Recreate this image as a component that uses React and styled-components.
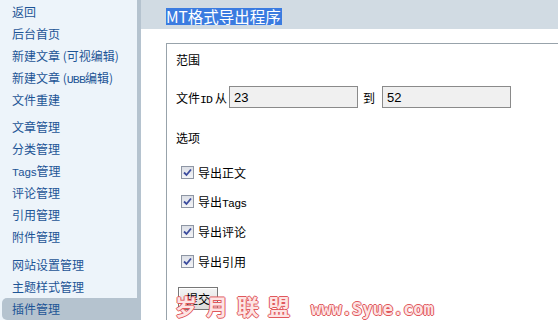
import React from 'react';
import styled, {createGlobalStyle} from 'styled-components';

const Global = createGlobalStyle`
    html, body {
        margin: 0;
        padding: 0;
        overflow: hidden;
        background: #ffffff;
    }
    body {
        font-family: "Noto Sans CJK SC", "Liberation Sans", sans-serif;
        font-size: 12px;
    }
`;

const Seite = styled.div`
    display: flex;
    width: 558px;
    height: 320px;
    position: relative;
    overflow: hidden;
`;

const Seitenleiste = styled.nav`
    width: 137px;
    flex: 0 0 137px;
    background: #edf4fa;
    border-right: 4px solid #b5c3cf;
    padding-top: 1px;
    box-sizing: content-box;
`;

const Gruppe = styled.div`
    margin-bottom: ${(p) => p.$abstand || 0}px;
`;

const Eintrag = styled.a`
    display: block;
    height: 22px;
    line-height: 22px;
    margin-left: 2px;
    margin-right: -4px;
    padding-left: 10px;
    color: #1d5596;
    font-size: 12px;
    white-space: nowrap;
    text-decoration: none;
    border-radius: 5px 0 0 5px;
    background: ${(p) => (p.$aktiv ? '#b5c3cf' : 'transparent')};
`;

const Haupt = styled.main`
    flex: 1;
    display: flex;
    flex-direction: column;
    min-width: 0;
`;

const Kopf = styled.div`
    flex: 0 0 29px;
    height: 29px;
    background: #d1dbe3;
    padding: 8px 0 0 25px;
    box-sizing: border-box;
`;

const Titel = styled.span`
    display: inline-block;
    height: 17px;
    line-height: 17px;
    font-size: 15.5px;
    color: #ffffff;
    background: #3a7be0;
    padding-right: 1px;
`;

const Inhalt = styled.div`
    flex: 0 0 auto;
    padding: 14px 0 0 25px;
`;

const Panel = styled.div`
    border-left: 1px solid #98a3ab;
    border-top: 1px solid #98a3ab;
    padding: 6px 0 20px 9px;
`;

const Beschriftung = styled.div`
    height: 20px;
    line-height: 20px;
    font-size: 12px;
    color: #000;
    margin-top: ${(p) => p.$oben || 0}px;
`;

const Bereich = styled.div`
    display: flex;
    align-items: center;
    height: 22px;
    margin-top: 16px;
    font-size: 12px;
    color: #000;
`;

const Feld = styled.input`
    width: 129px;
    height: 22px;
    box-sizing: border-box;
    border: 1px solid #8a8a8a;
    background: #f0f0f0;
    font-family: "Liberation Sans", sans-serif;
    font-size: 13px;
    padding: 0 4px;
    color: #000;
    margin-left: ${(p) => p.$links || 0}px;
    outline: none;
`;

const Text = styled.span`
    margin-left: ${(p) => p.$links || 0}px;
    white-space: nowrap;
`;

const Mono = styled.span`
    font-family: "Liberation Mono", "DejaVu Sans Mono", monospace;
    font-size: 11.5px;
    letter-spacing: -0.8px;
`;

const Optionen = styled.div`
    display: flex;
    flex-direction: column;
    gap: 9.7px;
    margin-top: 14px;
`;

const Option = styled.label`
    display: flex;
    align-items: center;
    height: 20px;
    padding-left: 5px;
    font-size: 12px;
    color: #000;
`;

const Haken = styled.span`
    width: 11px;
    height: 11px;
    flex: 0 0 11px;
    border: 1px solid #8e96a4;
    background: linear-gradient(#dcdfe6, #f4f5f8);
    display: inline-flex;
    align-items: center;
    justify-content: center;
    margin-right: 4px;
`;

const Knopf = styled.button`
    margin-top: 16px;
    margin-left: 2px;
    width: 40px;
    height: 23px;
    font-family: "Noto Sans CJK SC", sans-serif;
    font-size: 12px;
    color: #000;
    background: linear-gradient(#f4f4f4, #dcdcdc);
    border: 1px solid #777;
    box-shadow: inset 1px 1px 0 #fff;
    padding: 0;
`;

const Wasserzeichen = styled.div`
    position: absolute;
    left: 175px;
    top: 289px;
    display: flex;
    align-items: baseline;
    gap: 12px;
    pointer-events: none;
    color: #fde4e4;
    text-shadow: 1px 0 0 #e0585c, -1px 0 0 #e0585c, 0 1px 0 #e0585c, 0 -1px 0 #e0585c;
`;

const Zeichen = styled.span`
    font-size: ${(p) => p.$groesse}px;
    font-weight: bold;
    letter-spacing: ${(p) => p.$abstand || 0}px;
    font-family: ${(p) => (p.$latein ? '"DejaVu Sans Mono", monospace' : '"Noto Sans CJK SC", sans-serif')};
`;

const gruppen = [
    {abstand: 5, eintraege: ['返回', '后台首页', '新建文章 (可视编辑)', '新建文章 (UBB编辑)', '文件重建']},
    {abstand: 6, eintraege: ['文章管理', '分类管理', 'Tags管理', '评论管理', '引用管理', '附件管理']},
    {abstand: 0, eintraege: ['网站设置管理', '主题样式管理', '插件管理']},
];

const optionen = ['导出正文', '导出Tags', '导出评论', '导出引用'];

// lateinische Teile in schmaler Schrift wie im Original
const mitMono = (text) =>
    text.split(/(Tags|UBB|ID)/).map((teil, i) =>
        ['Tags', 'UBB', 'ID'].includes(teil) ? <Mono key={i}>{teil}</Mono> : teil
    );

const HakenIcon = () => (
    <svg width="9" height="9" viewBox="0 0 9 9">
        <path d="M1 4.5 L3.5 7 L8 1.5" fill="none" stroke="#3c4c9e" strokeWidth="1.8"/>
    </svg>
);

const App = () => {
    return (
        <>
            <Global/>
            <Seite>
                <Seitenleiste>
                    {gruppen.map((g, i) => (
                        <Gruppe key={i} $abstand={g.abstand}>
                            {g.eintraege.map((e) => (
                                <Eintrag key={e} $aktiv={e === '插件管理'}>{mitMono(e)}</Eintrag>
                            ))}
                        </Gruppe>
                    ))}
                </Seitenleiste>
                <Haupt>
                    <Kopf><Titel>MT格式导出程序</Titel></Kopf>
                    <Inhalt>
                        <Panel>
                            <Beschriftung>范围</Beschriftung>
                            <Bereich>
                                <Text>{mitMono('文件ID')}&nbsp;从</Text>
                                <Feld $links={2} defaultValue="23"/>
                                <Text $links={5}>到</Text>
                                <Feld $links={7} defaultValue="52"/>
                            </Bereich>
                            <Beschriftung $oben={20}>选项</Beschriftung>
                            <Optionen>
                                {optionen.map((o) => (
                                    <Option key={o}>
                                        <Haken><HakenIcon/></Haken>
                                        <Text>{mitMono(o)}</Text>
                                    </Option>
                                ))}
                            </Optionen>
                            <Knopf>提交</Knopf>
                        </Panel>
                    </Inhalt>
                </Haupt>
                <Wasserzeichen>
                    <Zeichen $groesse={22} $abstand={9}>岁月联盟</Zeichen>
                    <Zeichen $groesse={17} $latein>www.Syue.com</Zeichen>
                </Wasserzeichen>
            </Seite>
        </>
    );
};

export default App;
